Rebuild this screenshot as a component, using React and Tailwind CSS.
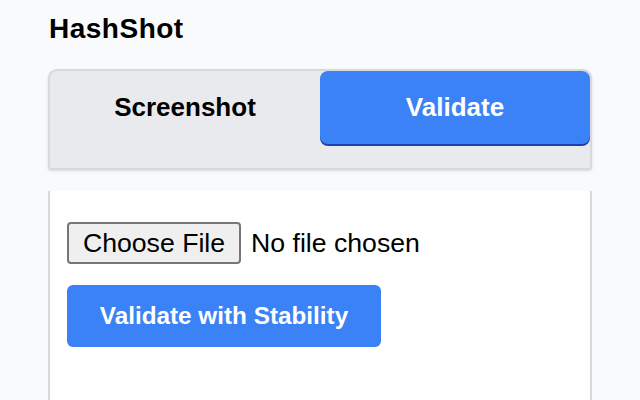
export default function App() {
  return (
    <div className="min-h-screen bg-[#f9fafb] px-[48px] pt-[13px] font-['Liberation_Sans',Arial,sans-serif] text-black">
      <h1 className="text-[28px] leading-[32px] font-bold tracking-[0.5px] pl-px">HashShot</h1>

      <div className="mt-[24px] h-[101px] rounded-t-[9px] rounded-b-[3px] border-2 border-[#d7d9de] bg-[#e9eaee] shadow-sm">
        <div className="flex h-[73px]">
          <button className="flex-1 text-[26px] font-bold">Screenshot</button>
          <button className="flex-1 rounded-[8px] bg-[#3b82f6] text-[26px] font-bold text-white shadow-[0_2px_0_#1e40af]">
            Validate
          </button>
        </div>
      </div>

      <div className="mt-[21px] h-[209px] border-x-2 border-[#d7d9de] bg-white px-[17px] pt-[31px]">
        <div className="flex items-center gap-[10px]">
          <span className="flex h-[42px] w-[174px] items-center justify-center rounded-[4px] border-2 border-[#767676] bg-[#efefef] text-[26.67px]">
            Choose File
          </span>
          <span className="text-[26.67px]">No file chosen</span>
        </div>
        <button className="mt-[21px] h-[62px] w-[314px] rounded-[6px] bg-[#3b82f6] text-[24.3px] font-bold text-white">
          Validate with Stability
        </button>
      </div>
    </div>
  )
}
